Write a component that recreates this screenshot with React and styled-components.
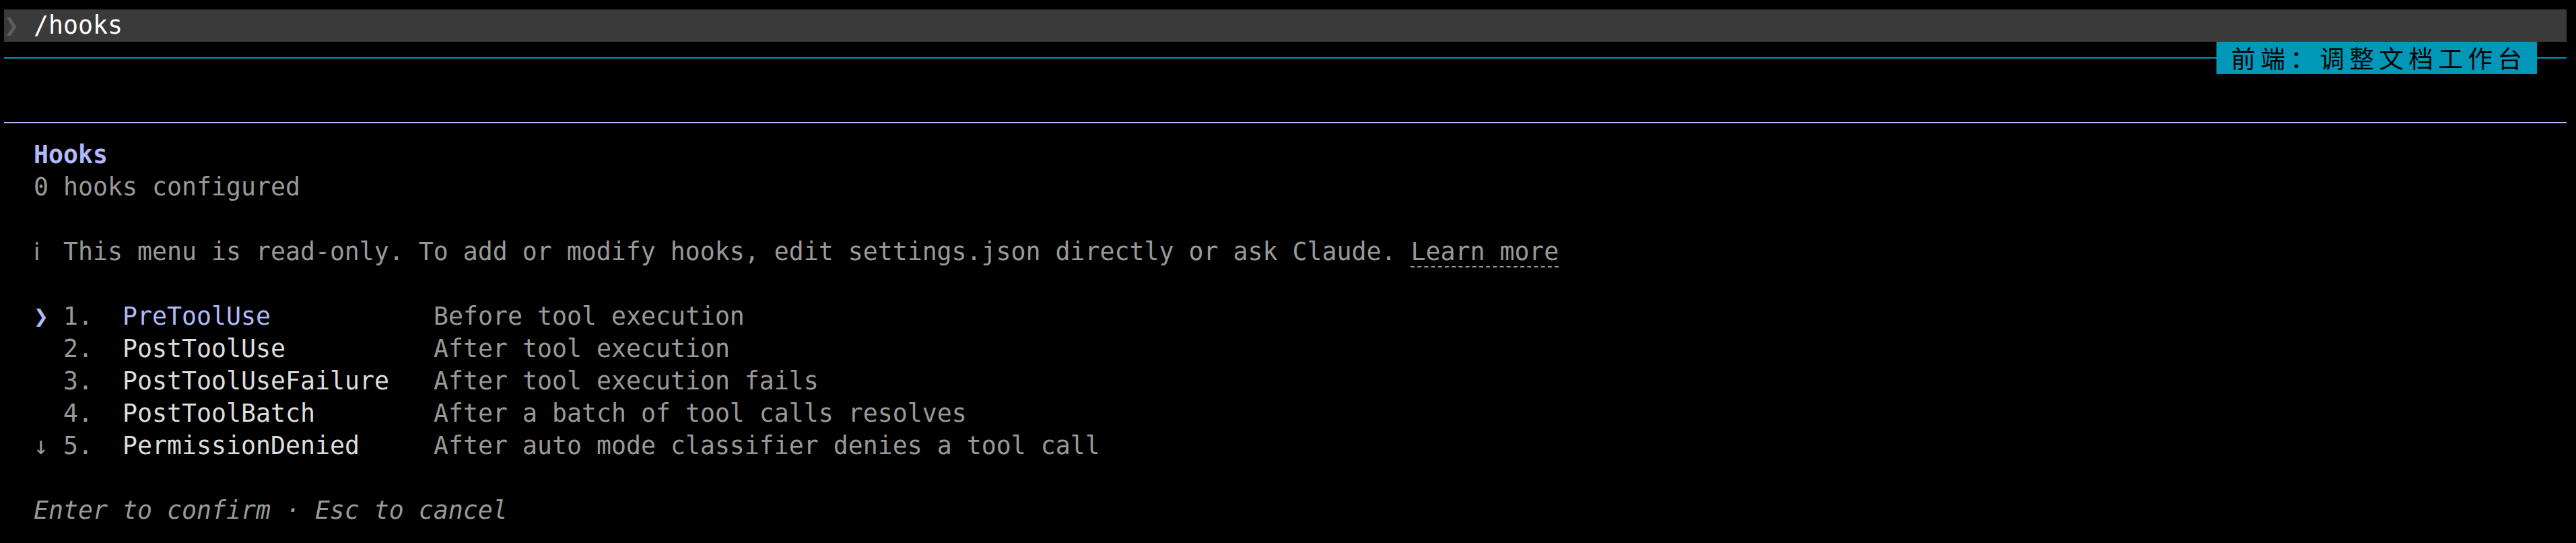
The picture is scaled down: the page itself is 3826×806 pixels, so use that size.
import React from "react";
import styled, { createGlobalStyle } from "styled-components";

const CELL = 22;
const ROW = 48;

const GlobalStyle = createGlobalStyle`
  html, body {
    margin: 0;
    padding: 0;
    background: #000000;
  }
  body {
    width: 3826px;
    height: 806px;
    overflow: hidden;
  }
`;

const Screen = styled.div`
  box-sizing: border-box;
  width: 3826px;
  height: 806px;
  padding: 14px 14px 0 6px;
  background: #000000;
  color: #dddddd;
  font-family: "DejaVu Sans Mono", "Liberation Mono", monospace;
  font-size: 36.54px;
  line-height: ${ROW}px;
  white-space: pre;
  overflow: hidden;
`;

const PromptBar = styled.div`
  display: flex;
  align-items: center;
  height: ${ROW}px;
  background: #3a3a3a;
  color: #ffffff;
`;

const PromptGlyph = styled.span`
  display: inline-block;
  width: ${CELL * 2}px;
  color: #5e5e5e;
`;

const Rule = styled.div`
  display: flex;
  align-items: center;
  height: ${ROW}px;
`;

const Line = styled.div`
  flex: ${(p) => (p.$width ? "none" : "1")};
  width: ${(p) => (p.$width ? `${p.$width}px` : "auto")};
  height: 2px;
  background: ${(p) => p.$color};
`;

const Tag = styled.div`
  display: flex;
  align-items: center;
  height: ${ROW}px;
  padding: 0 14.5px 0 ${CELL}px;
  background: #0097b9;
  color: #000000;
  font-family: "Noto Sans CJK SC", "DejaVu Sans", sans-serif;
  font-size: 36.5px;
  letter-spacing: 7.5px;
`;

const Blank = styled.div`
  height: ${ROW}px;
`;

const Text = styled.div`
  height: ${ROW}px;
  padding-left: ${CELL * 2}px;
  color: ${(p) => p.$color || "#999999"};
  font-weight: ${(p) => (p.$bold ? 700 : 400)};
  font-style: ${(p) => (p.$italic ? "italic" : "normal")};
`;

const Cell = styled.span`
  display: inline-block;
  width: ${(p) => (p.$cells || 1) * CELL}px;
  color: ${(p) => p.$color || "inherit"};
`;

const Link = styled.span`
  text-decoration-line: underline;
  text-decoration-style: dashed;
  text-decoration-thickness: 2px;
  text-underline-offset: 9px;
`;

const List = styled.div`
  display: grid;
  grid-template-columns: ${CELL * 2}px ${CELL * 4}px ${CELL * 21}px 1fr;
  grid-auto-rows: ${ROW}px;
  padding-left: ${CELL * 2}px;
`;

const Marker = styled.span`
  color: ${(p) => (p.$active ? "#b1b9f9" : "#999999")};
`;

const Num = styled.span`
  color: #999999;
`;

const Name = styled.span`
  color: ${(p) => (p.$active ? "#b1b9f9" : "#dddddd")};
`;

const Desc = styled.span`
  color: #999999;
`;

const hooks = [
  { name: "PreToolUse", desc: "Before tool execution", marker: "❯", active: true },
  { name: "PostToolUse", desc: "After tool execution" },
  { name: "PostToolUseFailure", desc: "After tool execution fails" },
  { name: "PostToolBatch", desc: "After a batch of tool calls resolves" },
  { name: "PermissionDenied", desc: "After auto mode classifier denies a tool call", marker: "↓" },
];

export default function App() {
  return (
    <>
      <GlobalStyle />
      <Screen>
        <PromptBar>
          <PromptGlyph>❯</PromptGlyph>
          <span>/hooks</span>
        </PromptBar>
        <Rule>
          <Line $color="#0097b9" />
          <Tag>前端：调整文档工作台</Tag>
          <Line $color="#0097b9" $width={CELL * 2} />
        </Rule>
        <Blank />
        <Rule>
          <Line $color="#b1b9f9" />
        </Rule>
        <Text $color="#b1b9f9" $bold>Hooks</Text>
        <Text>0 hooks configured</Text>
        <Blank />
        <Text>
          <Cell>ℹ</Cell>
          {" This menu is read-only. To add or modify hooks, edit settings.json directly or ask Claude. "}
          <Link>Learn more</Link>
        </Text>
        <Blank />
        <List>
          {hooks.map((h, i) => (
            <React.Fragment key={h.name}>
              <Marker $active={h.active}>{h.marker || ""}</Marker>
              <Num>{`${i + 1}.`}</Num>
              <Name $active={h.active}>{h.name}</Name>
              <Desc>{h.desc}</Desc>
            </React.Fragment>
          ))}
        </List>
        <Blank />
        <Text $italic>Enter to confirm · Esc to cancel</Text>
      </Screen>
    </>
  );
}
